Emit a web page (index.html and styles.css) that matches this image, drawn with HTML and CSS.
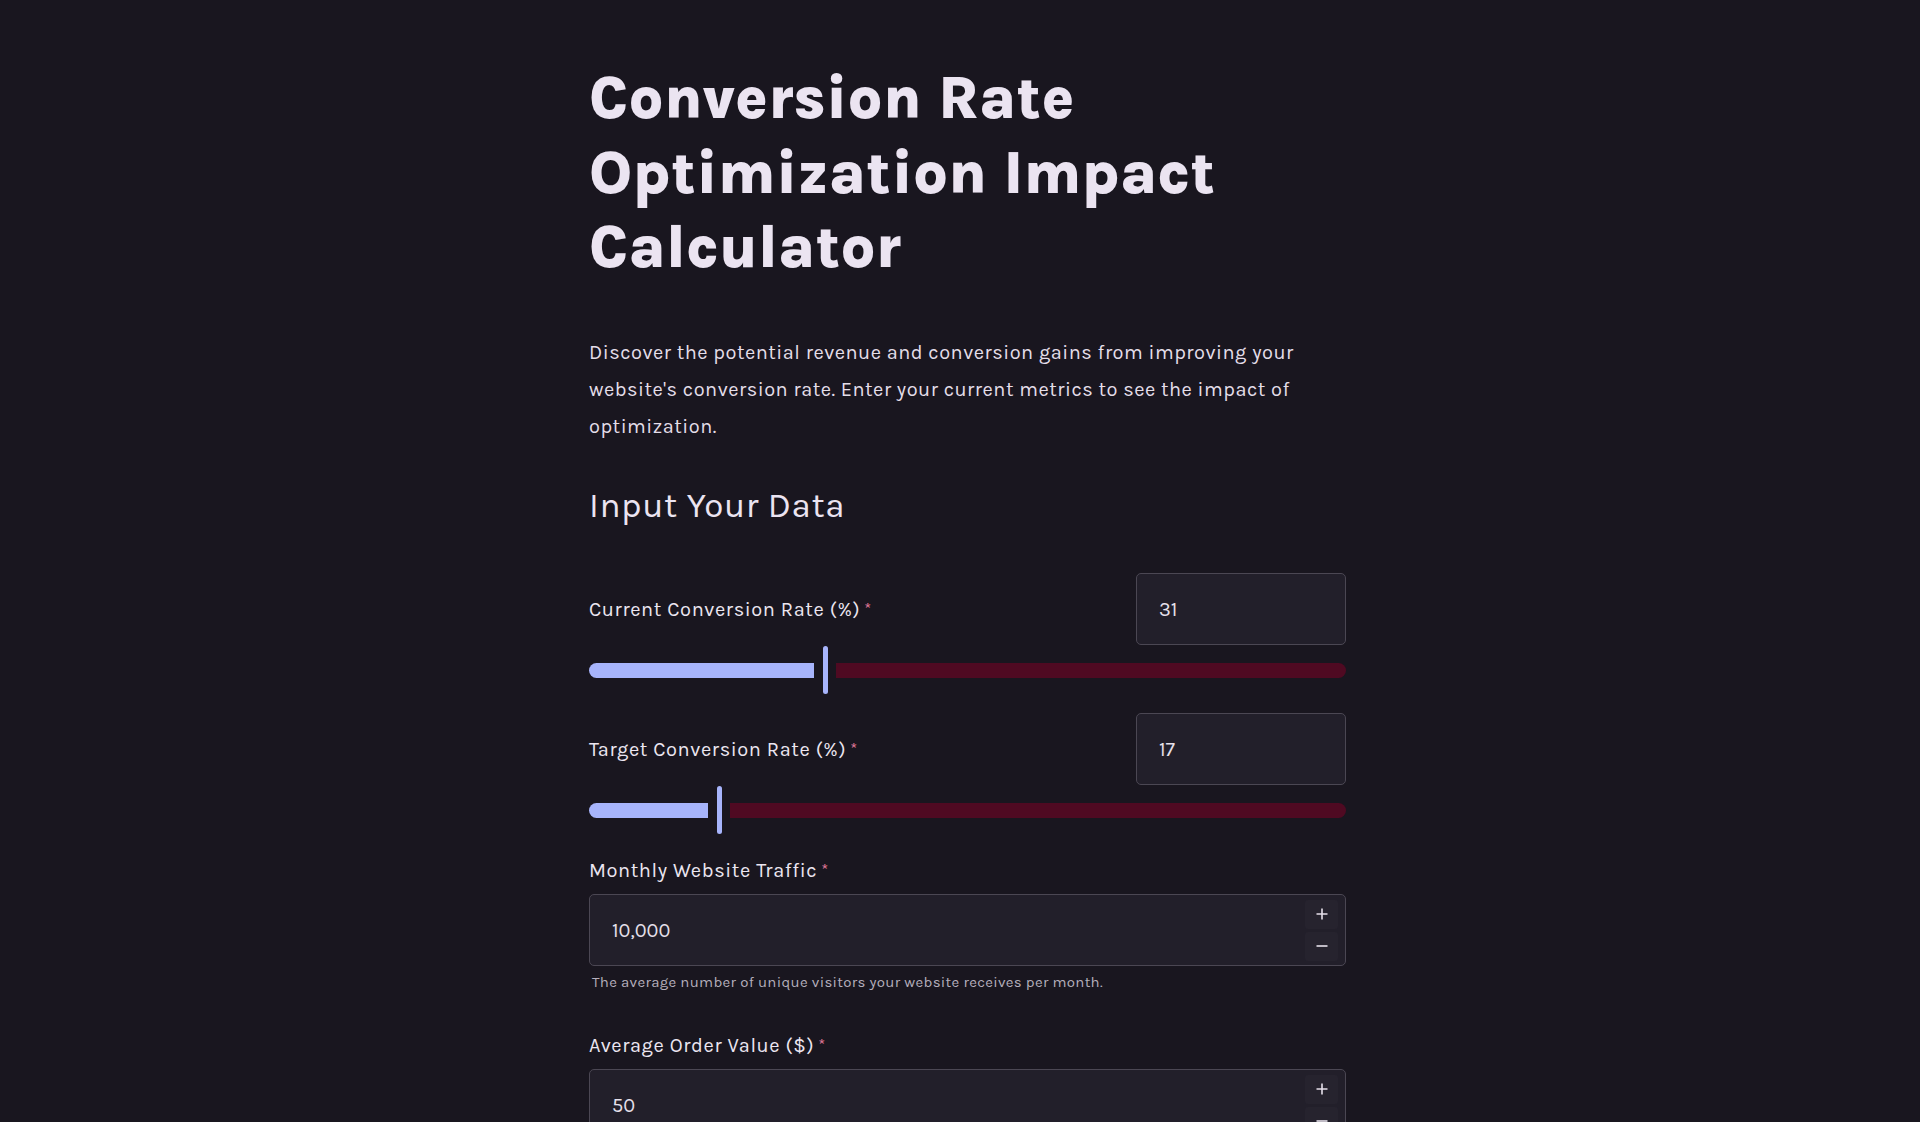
FILE: index.html
```html
<!DOCTYPE html>
<html lang="en">
<head>
<meta charset="utf-8">
<title>Conversion Rate Optimization Impact Calculator</title>
<link rel="stylesheet" href="styles.css">
</head>
<body>
<div class="page">
  <main class="content">
    <h1 class="title">Conversion Rate Optimization Impact Calculator</h1>
    <p class="intro">Discover the potential revenue and conversion gains from improving your website's conversion rate. Enter your current metrics to see the impact of optimization.</p>
    <h2 class="section">Input Your Data</h2>

    <div class="slider-field">
      <div class="slider-head">
        <label class="label">Current Conversion Rate (%)<span class="req">*</span></label>
        <div class="small-input">31</div>
      </div>
      <div class="slider">
        <div class="fill" style="width: calc(31% - 10px)"></div>
        <div class="thumb"></div>
        <div class="rest"></div>
      </div>
    </div>

    <div class="slider-field">
      <div class="slider-head">
        <label class="label">Target Conversion Rate (%)<span class="req">*</span></label>
        <div class="small-input">17</div>
      </div>
      <div class="slider">
        <div class="fill" style="width: calc(17% - 10px)"></div>
        <div class="thumb"></div>
        <div class="rest"></div>
      </div>
    </div>

    <div class="num-field">
      <label class="label">Monthly Website Traffic<span class="req">*</span></label>
      <div class="num-input">
        <span class="value">10,000</span>
        <div class="steps">
          <div class="step"><svg width="12" height="12" viewBox="0 0 12 12"><path d="M6 0.5V11.5M0.5 6H11.5" stroke="#e6e0ea" stroke-width="1.6"/></svg></div>
          <div class="step"><svg width="12" height="12" viewBox="0 0 12 12"><path d="M0.5 6H11.5" stroke="#e6e0ea" stroke-width="1.6"/></svg></div>
        </div>
      </div>
      <p class="help">The average number of unique visitors your website receives per month.</p>
    </div>

    <div class="num-field">
      <label class="label">Average Order Value ($)<span class="req">*</span></label>
      <div class="num-input">
        <span class="value">50</span>
        <div class="steps">
          <div class="step"><svg width="12" height="12" viewBox="0 0 12 12"><path d="M6 0.5V11.5M0.5 6H11.5" stroke="#e6e0ea" stroke-width="1.6"/></svg></div>
          <div class="step"><svg width="12" height="12" viewBox="0 0 12 12"><path d="M0.5 6H11.5" stroke="#e6e0ea" stroke-width="1.6"/></svg></div>
        </div>
      </div>
    </div>
  </main>
</div>
</body>
</html>
```

FILE: styles.css
```css
* { box-sizing: border-box; }
html, body {
  margin: 0;
  padding: 0;
  background: #19161f;
  height: 1122px;
  overflow: hidden;
}
body {
  font-family: "Karla", "Lato", "Noto Sans", sans-serif;
  color: #e6e0ea;
}
.page {
  display: flex;
  justify-content: center;
  padding-left: 15px;
}
.content {
  width: 757px;
  padding-top: 61px;
}
.title {
  margin: 0;
  font-size: 60px;
  line-height: 74.7px;
  font-weight: 800;
  letter-spacing: 0.2px;
  color: #ebe4f1;
}
.intro {
  margin: 50px 0 0;
  font-size: 20px;
  line-height: 36.7px;
  letter-spacing: 0.5px;
  color: #e4dee9;
}
.section {
  margin: 39px 0 0;
  font-size: 35px;
  line-height: 44px;
  font-weight: 400;
  letter-spacing: 0.6px;
  color: #ebe4f1;
}
.slider-field { margin-top: 45px; }
.slider-field + .slider-field { margin-top: 19px; }
.slider-head {
  display: flex;
  align-items: center;
  justify-content: space-between;
}
.label {
  font-size: 20px;
  letter-spacing: 0.6px;
  color: #ece6f1;
}
.req { color: #e2799b; margin-left: 4px; font-size: 17px; vertical-align: 2px; }
.small-input {
  width: 210px;
  height: 72px;
  background: #221f2a;
  border: 1px solid #4b4753;
  border-radius: 5px;
  padding: 0 22px;
  display: flex;
  align-items: center;
  font-size: 20px;
  color: #e6e0ea;
}
.slider {
  display: flex;
  align-items: center;
  height: 48px;
  margin-top: 1px;
}
.fill {
  height: 15px;
  background: #a7b4fb;
  border-radius: 8px 0 0 8px;
  margin-right: 9px;
}
.thumb {
  width: 5px;
  height: 48px;
  background: #a7b4fb;
  border-radius: 3px;
  margin-right: 8px;
}
.rest {
  flex: 1;
  height: 15px;
  background: #4f0a22;
  border-radius: 0 8px 8px 0;
}
.num-field { margin-top: 22px; }
.num-field + .num-field { margin-top: 40px; }
.num-field .label { display: block; line-height: 26px; }
.num-input {
  margin-top: 10px;
  height: 72px;
  background: #221f2a;
  border: 1px solid #4b4753;
  border-radius: 5px;
  padding: 0 7px 0 22px;
  display: flex;
  align-items: center;
  justify-content: space-between;
}
.value { font-size: 20px; color: #e6e0ea; }
.steps {
  display: flex;
  flex-direction: column;
  gap: 3px;
}
.step {
  width: 33px;
  height: 29px;
  background: #26232e;
  border-radius: 3px;
  display: flex;
  align-items: center;
  justify-content: center;
}
.help {
  margin: 7px 0 0 3px;
  font-size: 15px;
  letter-spacing: 0.3px;
  color: #b5afbc;
}
```
